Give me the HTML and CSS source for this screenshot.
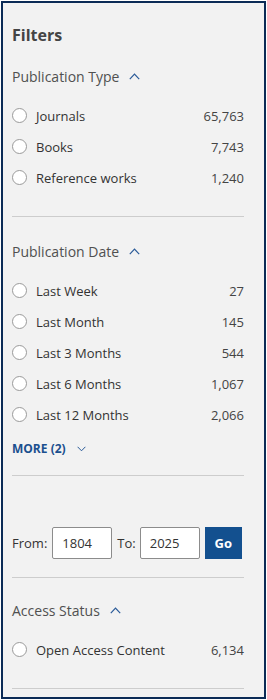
FILE: index.html
```html
<!DOCTYPE html>
<html>
<head>
<meta charset="utf-8">
<link rel="stylesheet" href="styles.css">
</head>
<body>
<aside class="panel">
  <h2 class="title">Filters</h2>

  <section class="group">
    <div class="group-head">Publication Type
      <svg class="caret" width="11" height="7" viewBox="0 0 11 7"><path d="M0.8 6.2 L5.5 1.2 L10.2 6.2" fill="none" stroke="#2a5a98" stroke-width="1.2"/></svg>
    </div>
    <ul class="options">
      <li class="opt"><span class="radio"></span><span class="label">Journals</span><span class="count">65,763</span></li>
      <li class="opt"><span class="radio"></span><span class="label">Books</span><span class="count">7,743</span></li>
      <li class="opt"><span class="radio"></span><span class="label">Reference works</span><span class="count">1,240</span></li>
    </ul>
  </section>
  <hr class="divider d1">

  <section class="group g2">
    <div class="group-head">Publication Date
      <svg class="caret" width="11" height="7" viewBox="0 0 11 7"><path d="M0.8 6.2 L5.5 1.2 L10.2 6.2" fill="none" stroke="#2a5a98" stroke-width="1.2"/></svg>
    </div>
    <ul class="options">
      <li class="opt"><span class="radio"></span><span class="label">Last Week</span><span class="count">27</span></li>
      <li class="opt"><span class="radio"></span><span class="label">Last Month</span><span class="count">145</span></li>
      <li class="opt"><span class="radio"></span><span class="label">Last 3 Months</span><span class="count">544</span></li>
      <li class="opt"><span class="radio"></span><span class="label">Last 6 Months</span><span class="count">1,067</span></li>
      <li class="opt"><span class="radio"></span><span class="label">Last 12 Months</span><span class="count">2,066</span></li>
    </ul>
    <div class="more">MORE (2)
      <svg class="caret-down" width="9" height="6" viewBox="0 0 9 6"><path d="M0.6 0.8 L4.5 4.8 L8.4 0.8" fill="none" stroke="#2a5a98" stroke-width="1"/></svg>
    </div>
  </section>
  <hr class="divider d2">

  <div class="range">
    <span class="rlabel">From:</span>
    <input class="year" type="text" value="1804">
    <span class="rlabel to">To:</span>
    <input class="year y2" type="text" value="2025">
    <button class="go">Go</button>
  </div>
  <hr class="divider d3">

  <section class="group g3">
    <div class="group-head">Access Status
      <svg class="caret" width="11" height="7" viewBox="0 0 11 7"><path d="M0.8 6.2 L5.5 1.2 L10.2 6.2" fill="none" stroke="#2a5a98" stroke-width="1.2"/></svg>
    </div>
    <ul class="options">
      <li class="opt"><span class="radio"></span><span class="label">Open Access Content</span><span class="count">6,134</span></li>
    </ul>
  </section>
  <hr class="divider d4">
</aside>
</body>
</html>
```

FILE: styles.css
```css
* { box-sizing: border-box; }
html, body { margin: 0; padding: 0; background: #ffffff; }
body { font-family: "Open Sans", "Noto Sans", sans-serif; color: #333; }

.panel {
  margin: 1px 0 0 1px;
  width: 265px;
  height: 698px;
  border: 2px solid #0b2b56;
  background: #f2f2f2;
  padding: 0 20px 0 9px;
  overflow: hidden;
}

.title {
  margin: 21px 0 0 0;
  font-size: 16px;
  line-height: 22px;
  font-weight: 700;
  color: #444;
}

.group { margin-top: 21px; }
.g2 { margin-top: 25px; }
.g3 { margin-top: 23px; }

.group-head {
  display: flex;
  align-items: center;
  font-size: 14px;
  line-height: 20px;
  color: #505050;
}
.caret { margin-left: 10px; margin-top: -2px; }

.options {
  list-style: none;
  margin: 13px 0 0 0;
  padding: 0;
}
.opt {
  display: flex;
  align-items: center;
  height: 31px;
  font-size: 13px;
  color: #333;
}
.radio {
  width: 15px;
  height: 15px;
  border: 1px solid #9a9a9a;
  border-radius: 50%;
  background: #fff;
  flex: none;
}
.label { margin-left: 9px; flex: 1; }
.count { color: #444; }

.more {
  display: flex;
  align-items: center;
  margin-top: 10px;
  font-size: 12px;
  line-height: 18px;
  font-weight: 700;
  color: #1b4f8e;
}
.caret-down { margin-left: 11px; }

.divider {
  border: 0;
  border-top: 1px solid #cdcdcd;
  margin: 0;
  height: 0;
}
.d1 { margin-top: 23px; }
.d2 { margin-top: 17px; }
.d3 { margin-top: 18px; }
.d4 { margin-top: 23px; }

.range {
  display: flex;
  align-items: center;
  margin-top: 51px;
  height: 32px;
  font-size: 13px;
}
.rlabel { color: #333; }
.year {
  width: 60px;
  height: 32px;
  margin-left: 5px;
  border: 1px solid #8c8c8c;
  border-radius: 2px;
  background: #fff;
  padding: 0 0 0 9px;
  font-family: "Open Sans", "Noto Sans", sans-serif;
  font-size: 13px;
  color: #333;
  outline: none;
}
.y2 { margin-left: 4px; }
.to { margin-left: 5px; }
.go {
  margin-left: 5px;
  width: 37px;
  height: 32px;
  border: 0;
  background: #13508f;
  color: #fff;
  font-family: "Open Sans", "Noto Sans", sans-serif;
  font-weight: 700;
  font-size: 13px;
  padding: 0;
}
```
